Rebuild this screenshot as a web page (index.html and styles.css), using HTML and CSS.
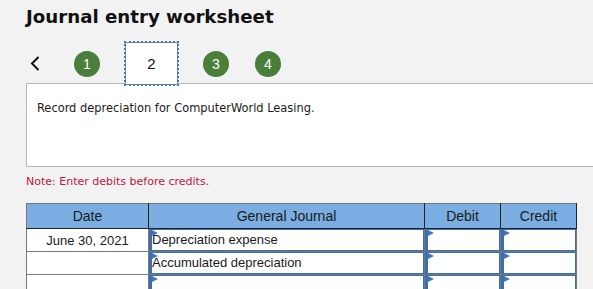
FILE: index.html
```html
<!DOCTYPE html>
<html>
<head>
<meta charset="utf-8">
<link rel="stylesheet" href="styles.css">
</head>
<body>
<h1 class="title">Journal entry worksheet</h1>
<div class="nav">
  <svg class="chev" width="10" height="15" viewBox="0 0 10 15"><path d="M8.5 1 L2 7.5 L8.5 14" fill="none" stroke="#111" stroke-width="2"/></svg>
  <span class="dot d1">1</span>
  <span class="tab">2</span>
  <span class="dot d3">3</span>
  <span class="dot d4">4</span>
</div>
<div class="panel">
  <p class="prompt">Record depreciation for ComputerWorld Leasing.</p>
</div>
<p class="note">Note: Enter debits before credits.</p>
<table class="grid">
  <thead>
    <tr><th class="c-date">Date</th><th class="c-gj">General Journal</th><th class="c-num">Debit</th><th class="c-num">Credit</th></tr>
  </thead>
  <tbody>
    <tr><td class="date">June 30, 2021</td><td><div class="inp">Depreciation expense</div></td><td><div class="inp"></div></td><td><div class="inp"></div></td></tr>
    <tr><td class="date"></td><td><div class="inp">Accumulated depreciation</div></td><td><div class="inp"></div></td><td><div class="inp"></div></td></tr>
    <tr><td class="date"></td><td><div class="inp"></div></td><td><div class="inp"></div></td><td><div class="inp"></div></td></tr>
  </tbody>
</table>
</body>
</html>
```
FILE: styles.css
```css
html, body { margin: 0; padding: 0; }
body {
  background: #f2f2f2;
  padding: 0 0 0 26px;
  font-family: "DejaVu Sans", Verdana, sans-serif;
  overflow: hidden;
}
.title {
  margin: 0;
  padding-top: 6px;
  font-size: 18.2px;
  line-height: 22px;
  font-weight: bold;
  color: #111;
}
.nav {
  display: flex;
  align-items: center;
  height: 43px;
  margin-top: 14px;
  position: relative;
  z-index: 2;
}
.chev { margin-left: 4px; display: block; }
.dot {
  width: 26px; height: 26px; border-radius: 50%;
  background: #4a7e3b; color: #fff;
  font-family: "Liberation Sans", Arial, sans-serif;
  font-size: 14px;
  display: flex; align-items: center; justify-content: center;
}
.d1 { margin-left: 34px; }
.d3 { margin-left: 25px; }
.d4 { margin-left: 26px; }
.tab {
  margin-left: 25px;
  box-sizing: border-box;
  width: 53px; height: 43px;
  background: #fff;
  border: 1px solid #8a8a8a;
  outline: 2px dotted #3a76c2;
  outline-offset: -1px;
  display: flex; align-items: center; justify-content: center;
  font-family: "Liberation Sans", Arial, sans-serif;
  font-size: 15px; color: #111;
}
.panel {
  margin-top: -2px;
  height: 84px;
  width: 600px;
  background: #fff;
  border: 1px solid #b5b5b5;
  box-sizing: border-box;
}
.prompt {
  margin: 16px 0 0 10px;
  font-family: "DejaVu Sans Condensed", "DejaVu Sans", sans-serif;
  font-stretch: condensed;
  font-size: 12.7px;
  color: #1a1a1a;
}
.note {
  margin: 8px 0 0 0;
  font-size: 11px;
  line-height: 14px;
  color: #b8203c;
}
.grid {
  margin-top: 14px;
  border-collapse: collapse;
  width: 549px;
  table-layout: fixed;
  font-family: "Liberation Sans", Arial, sans-serif;
  font-size: 13px;
  color: #1a1a1a;
}
.grid th {
  background: #7aaee3;
  height: 24px;
  padding: 0;
  font-size: 14px;
  font-weight: normal;
  border: 1px solid #222;
  border-top-color: #777;
  color: #1a1a1a;
}
.grid th:first-child { border-left-color: #777; }
.grid th:last-child { border-right-color: #222; }
.c-date { width: 121px; }
.c-gj { width: 275px; }
.c-num { width: 75px; }
.grid td {
  background: #fff;
  border: 1px solid #777;
  padding: 0;
  height: 22px;
}
.date { text-align: center; }
.inp {
  position: relative;
  box-sizing: border-box;
  height: 22px;
  border-style: solid;
  border-color: #3d6fae;
  border-width: 1px 1px 1px 3px;
  line-height: 20px;
  padding-left: 0;
  white-space: nowrap;
  overflow: hidden;
}
.inp::before {
  content: "";
  position: absolute;
  left: 0; top: 0;
  border-left: 6px solid #3d78c4;
  border-top: 3px solid transparent;
  border-bottom: 3px solid transparent;
}
```
